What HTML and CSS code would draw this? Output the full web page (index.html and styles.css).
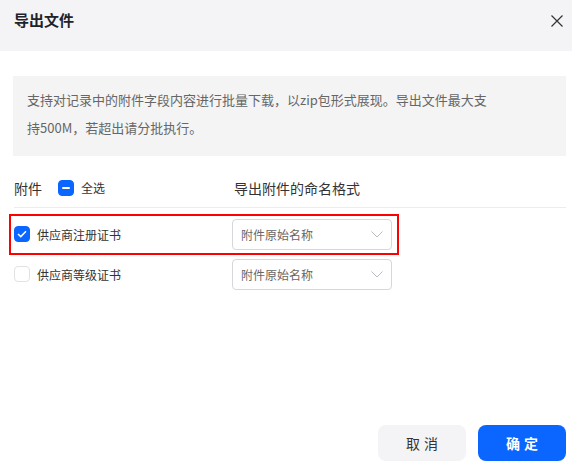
FILE: index.html
```html
<!DOCTYPE html>
<html lang="zh-CN">

<head>
  <meta charset="UTF-8" />
  <meta name="viewport" content="width=device-width, initial-scale=1.0" />
  <title>导出文件</title>
  <link rel="stylesheet" href="styles.css">
</head>

<body>
  <div class="dialog">
    <div class="dialog-header">
      <h1>导出文件</h1>
      <button class="close-btn" aria-label="关闭">
        <svg width="12" height="12" viewBox="0 0 12 12">
          <path d="M0.5 0.5 L11.5 11.5 M11.5 0.5 L0.5 11.5" stroke="#333" stroke-width="1.2" fill="none" />
        </svg>
      </button>
    </div>

    <div class="dialog-body">
      <div class="notice">
        支持对记录中的附件字段内容进行批量下载，以zip包形式展现。导出文件最大支持500M，若超出请分批执行。
      </div>

      <div class="table-head">
        <div class="col-name">
          <span class="head-label">附件</span>
          <span class="checkbox indeterminate"></span>
          <span class="small-label">全选</span>
        </div>
        <div class="col-format">导出附件的命名格式</div>
      </div>

      <div class="row highlight">
        <div class="col-name">
          <span class="checkbox checked">
            <svg width="10" height="8" viewBox="0 0 10 8">
              <path d="M1 4 L3.8 6.6 L9 1.2" stroke="#fff" stroke-width="1.5" fill="none" />
            </svg>
          </span>
          <span class="small-label">供应商注册证书</span>
        </div>
        <div class="select">
          <span>附件原始名称</span>
          <svg width="12" height="7" viewBox="0 0 12 7">
            <path d="M0.5 0.5 L6 6 L11.5 0.5" stroke="#b8bcc2" stroke-width="1" fill="none" />
          </svg>
        </div>
      </div>

      <div class="row">
        <div class="col-name">
          <span class="checkbox"></span>
          <span class="small-label">供应商等级证书</span>
        </div>
        <div class="select">
          <span>附件原始名称</span>
          <svg width="12" height="7" viewBox="0 0 12 7">
            <path d="M0.5 0.5 L6 6 L11.5 0.5" stroke="#b8bcc2" stroke-width="1" fill="none" />
          </svg>
        </div>
      </div>
    </div>

    <div class="dialog-footer">
      <button class="btn btn-cancel">取消</button>
      <button class="btn btn-primary">确定</button>
    </div>
  </div>
</body>

</html>
```

FILE: styles.css
```css
* {
  box-sizing: border-box;
  margin: 0;
  padding: 0;
}

body {
  font-family: "Noto Sans CJK SC", "Noto Sans", sans-serif;
  background: #fff;
  color: #333;
}

.dialog {
  display: flex;
  flex-direction: column;
  height: 100vh;
}

.dialog-header {
  display: flex;
  justify-content: space-between;
  align-items: flex-start;
  height: 51px;
  padding: 10px 9px 0 14px;
  background: #f4f4f6;
}

.dialog-header h1 {
  font-size: 15px;
  line-height: 20px;
  font-weight: 700;
  color: #1f2329;
}

.close-btn {
  border: none;
  background: none;
  width: 12px;
  height: 12px;
  margin-top: 5px;
  cursor: pointer;
}

.close-btn svg {
  display: block;
}

.dialog-body {
  padding: 25px 6px 0 14px;
}

.notice {
  margin-left: -1px;
  height: 80px;
  padding: 10px 72px 0 14px;
  background: #f4f4f4;
  font-size: 13px;
  line-height: 28px;
  color: #666;
}

.table-head {
  display: flex;
  align-items: center;
  height: 40px;
  margin-top: 12px;
  border-bottom: 1px solid #ececee;
}

.col-name {
  display: flex;
  align-items: center;
  width: 218px;
}

.head-label {
  font-size: 14px;
  color: #333;
  margin-right: 16px;
}

.col-format {
  font-size: 14px;
  color: #333;
  padding-left: 2px;
}

.small-label {
  font-size: 12px;
  color: #333;
  margin-left: 7px;
}

.checkbox {
  display: inline-flex;
  align-items: center;
  justify-content: center;
  width: 16px;
  height: 16px;
  border: 1px solid #e0e2e6;
  border-radius: 4px;
  background: #fff;
}

.checkbox.checked,
.checkbox.indeterminate {
  background: #0a66ff;
  border-color: #0a66ff;
}

.checkbox.indeterminate::after {
  content: "";
  width: 8px;
  height: 2px;
  background: #fff;
  border-radius: 1px;
}

.row {
  display: flex;
  align-items: center;
  width: 390px;
  height: 40px;
  margin-left: -5px;
  padding-left: 5px;
}

.table-head + .row {
  margin-top: 6px;
}

.row.highlight {
  height: 41px;
  padding-bottom: 1px;
  margin-bottom: -1px;
  outline: 2px solid #f00;
  outline-offset: -2px;
}

.select {
  display: flex;
  align-items: center;
  justify-content: space-between;
  width: 160px;
  height: 31px;
  padding: 0 8px 0 8px;
  border: 1px solid #d5d7db;
  border-radius: 4px;
  font-size: 12px;
  color: #666;
}

.dialog-footer {
  display: flex;
  justify-content: flex-end;
  gap: 12px;
  margin-top: auto;
  padding: 0 6px 7px 0;
}

.btn {
  width: 88px;
  height: 36px;
  border: none;
  border-radius: 8px;
  font-family: inherit;
  font-size: 14px;
  letter-spacing: 4px;
  text-indent: 4px;
  cursor: pointer;
}

.btn-cancel {
  background: #f4f4f6;
  color: #333;
}

.btn-primary {
  background: #0a66ff;
  color: #fff;
  font-weight: 700;
}
```
